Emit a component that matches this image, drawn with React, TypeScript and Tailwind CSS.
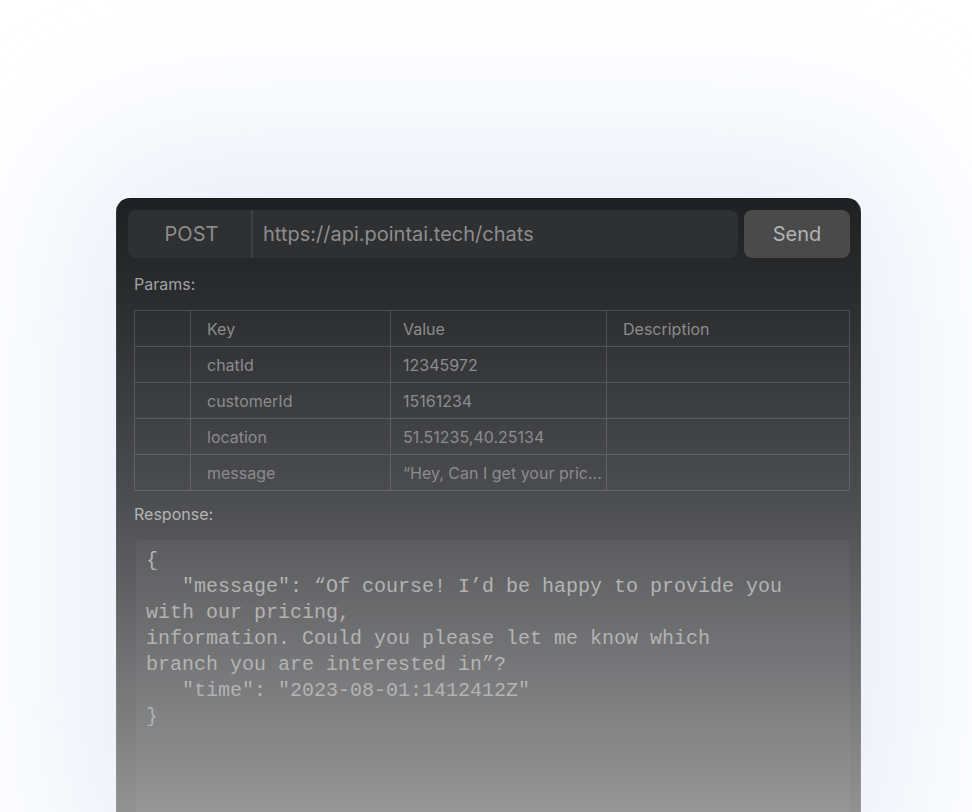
import React from 'react'

const rows = [
  { key: 'Key', value: 'Value', desc: 'Description' },
  { key: 'chatId', value: '12345972', desc: '' },
  { key: 'customerId', value: '15161234', desc: '' },
  { key: 'location', value: '51.51235,40.25134', desc: '' },
  { key: 'message', value: '“Hey, Can I get your pric...', desc: '' },
]

const responseText = `{
   "message": “Of course! I’d be happy to provide you
with our pricing,
information. Could you please let me know which
branch you are interested in”?
   "time": "2023-08-01:1412412Z"
}`

const App: React.FC = () => {
  return (
    <div
      className="h-screen w-full overflow-hidden bg-white pl-[116px] pt-[198px]"
      style={{ fontFamily: 'Inter, "Noto Sans", sans-serif' }}
    >
      {/* Card */}
      <div className="w-[745px] h-[660px] rounded-t-[14px] border border-[#ffffff12] border-t-[#18191b] bg-[linear-gradient(180deg,#1f2022_0%,#2b2c2e_15%,#4e4f52_47%,#9c9c9c_100%)] shadow-[0_-10px_170px_40px_rgba(205,212,240,0.45)] pl-[17px] pr-[10px] pt-[11px]">
        {/* Request bar */}
        <div className="flex gap-[6px] -ml-[6px]">
          <div className="flex h-[48px] flex-1 items-center rounded-[8px] bg-[#2f3032]">
            <div className="flex h-full w-[125px] items-center justify-center border-r-2 border-[#3e3f41] text-[20px] text-[#8c8c8c]">
              <span className="pl-[4px]">POST</span>
            </div>
            <div className="pl-[10px] text-[20px] text-[#8d8d8d]">https://api.pointai.tech/chats</div>
          </div>
          <button className="h-[48px] w-[106px] rounded-[8px] bg-[#4a4a4b] text-[20px] text-[#b3b3b3]">
            Send
          </button>
        </div>

        {/* Params */}
        <div className="mt-[14px] text-[16px] leading-[24px] text-[#a2a2a2]">Params:</div>
        <div className="mt-[14px] border-t border-l border-[#ffffff26]">
          {rows.map((r) => (
            <div key={r.key} className="grid h-[36px] grid-cols-[56px_200px_216px_1fr] text-[16px] text-[#8c8c8c]">
              <div className="border-r border-b border-[#ffffff26]" />
              <div className="flex items-center border-r border-b border-[#ffffff26] pl-4">{r.key}</div>
              <div className="flex items-center overflow-hidden whitespace-nowrap border-r border-b border-[#ffffff26] pl-3">
                {r.value}
              </div>
              <div className="flex items-center border-r border-b border-[#ffffff26] pl-4">{r.desc}</div>
            </div>
          ))}
        </div>

        {/* Response */}
        <div className="mt-[11px] text-[16px] leading-[24px] text-[#b4b4b4]">Response:</div>
        <div className="ml-[2px] mt-[14px] h-[320px] rounded-[4px] bg-[#ffffff0a] px-[10px] pt-[8px]">
          <pre
            className="whitespace-pre text-[20px] leading-[26px] text-[#b3b3b3]"
            style={{ fontFamily: '"Liberation Mono", "DejaVu Sans Mono", monospace' }}
          >
            {responseText}
          </pre>
        </div>
      </div>
    </div>
  )
}

export default App
